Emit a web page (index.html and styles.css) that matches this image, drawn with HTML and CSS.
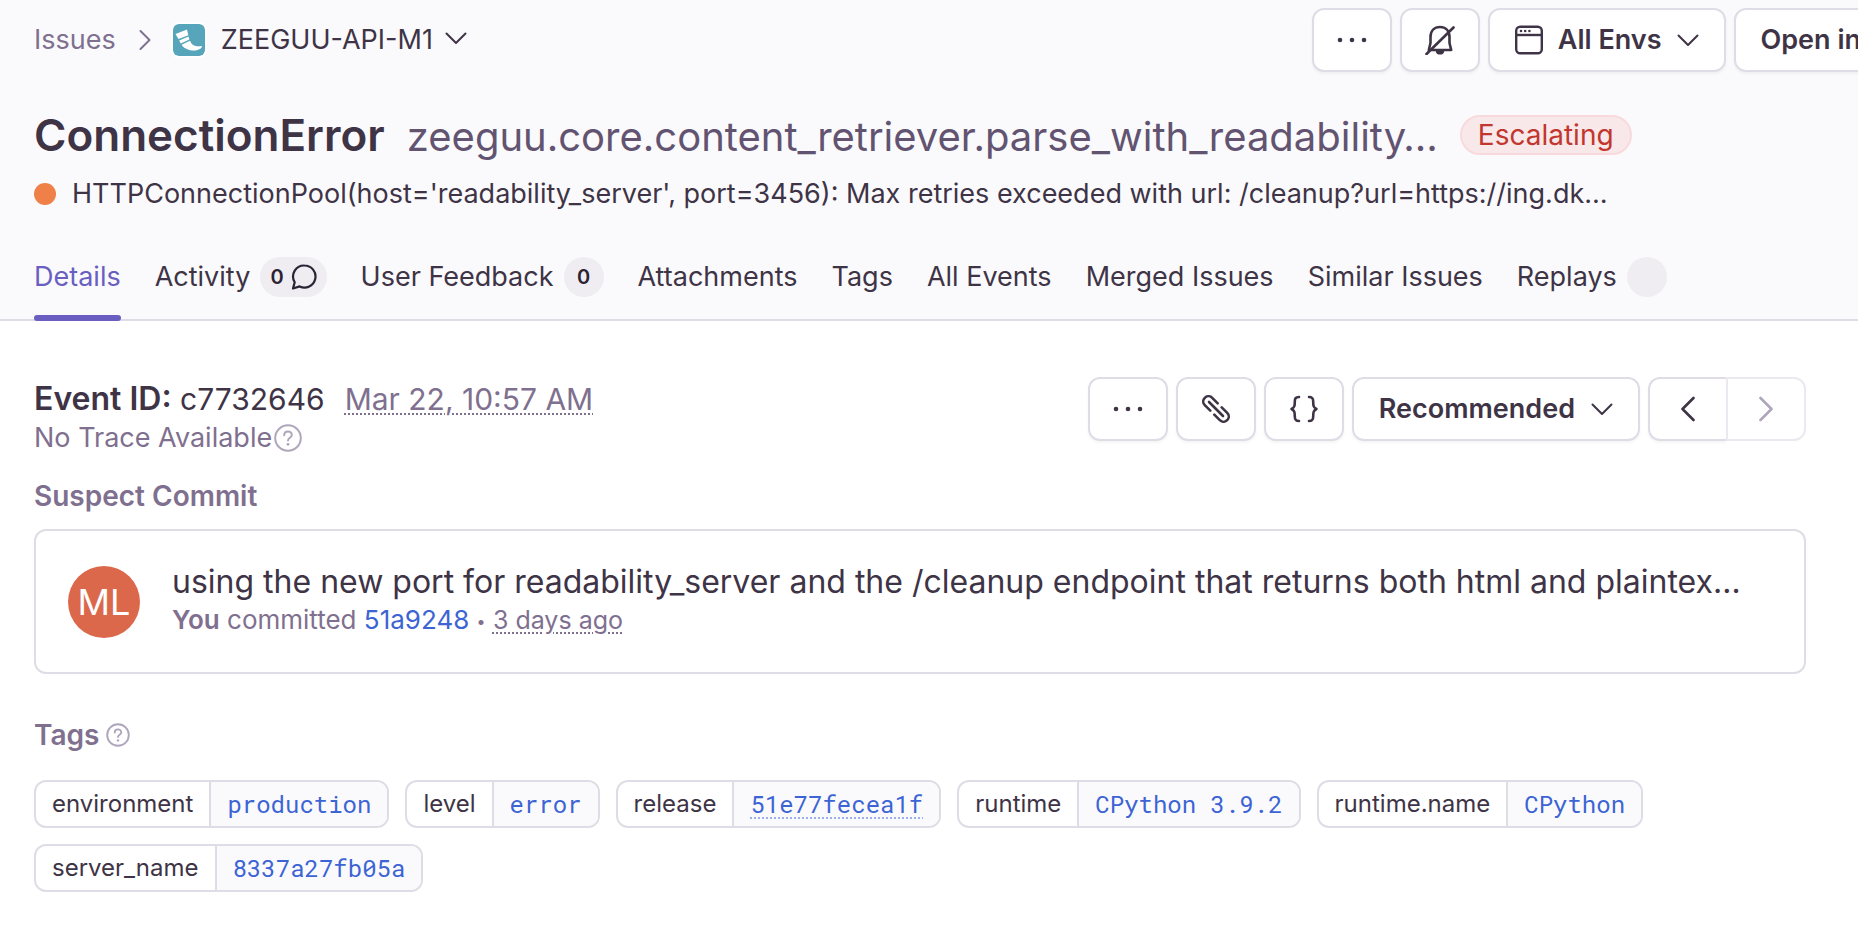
FILE: index.html
```
<!DOCTYPE html>
<html lang="en">
<head>
<meta charset="utf-8">
<meta name="viewport" content="width=device-width, initial-scale=1">
<title>ConnectionError</title>
<link rel="stylesheet" href="styles.css">
</head>
<body>
<header class="header">
  <div class="topbar">
    <nav class="crumbs" aria-label="Breadcrumb">
      <a class="crumb-link" href="#issues">Issues</a>
      <svg class="crumb-sep" width="12" height="22" viewBox="0 0 12 22" fill="none" stroke="currentColor" stroke-width="2" stroke-linecap="round" stroke-linejoin="round"><path d="M1.5 2 10.5 11 1.5 20"/></svg>
      <svg class="project-icon" width="32" height="32" viewBox="0 0 32 32"><rect width="32" height="32" rx="5" fill="#57a5ba"/><g fill="#fff"><path d="M2.500 10 14 5.500 15.300 11.200 5.500 15Z"/><path d="M6.200 16.500 15.600 12.600 16.300 15.400 7.800 19.500Z"/><path d="M8.600 20.800 17 16.800C18.800 21.500 22.500 23 29.200 22 28.500 25.500 23 27.200 17.500 26.200 12.500 25.200 10 23 8.600 20.800Z"/></g></svg>
      <button class="crumb-menu" type="button">ZEEGUU-API-M1
        <svg class="crumb-chevron" width="22" height="13" viewBox="0 0 22 13" fill="none" stroke="currentColor" stroke-width="2" stroke-linecap="round" stroke-linejoin="round"><path d="M1.500 1.500 11 11 20.500 1.500"/></svg>
      </button>
    </nav>
    <div class="actions">
      <button class="btn btn-icon" type="button" aria-label="More actions"><svg width="30" height="30" viewBox="0 0 30 30" fill="currentColor"><circle cx="3" cy="15" r="2.300"/><circle cx="15" cy="15" r="2.300"/><circle cx="27" cy="15" r="2.300"/></svg></button>
      <button class="btn btn-icon" type="button" aria-label="Subscribe"><svg width="30" height="30" viewBox="0 0 30 30" fill="none" stroke="currentColor" stroke-width="2.600" stroke-linecap="round" stroke-linejoin="round"><path d="M3.800 25H26.200L24.500 18V12C24.500 5.500 20.500 2 15 2S5.500 5.500 5.500 12V18Z"/><path d="M11.500 26.500a3.600 3 0 0 0 7 0Z" fill="currentColor" stroke-width="1.500"/><path d="M1.500 29 28.500 2.500"/></svg></button>
      <button class="btn" type="button">
        <svg width="28" height="30" viewBox="0 0 28 30" fill="none" stroke="currentColor" stroke-width="2.400"><rect x="1.200" y="1.700" width="25.600" height="26.600" rx="4"/><path d="M1.200 10H26.800"/><g fill="currentColor" stroke="none"><circle cx="6" cy="6" r="1.300"/><circle cx="10.200" cy="6" r="1.300"/><circle cx="14.400" cy="6" r="1.300"/></g></svg>
        <span class="btn-text">All Envs</span>
        <svg width="22" height="13" viewBox="0 0 22 13" fill="none" stroke="currentColor" stroke-width="2" stroke-linecap="round" stroke-linejoin="round"><path d="M1.500 1.500 11 11 20.500 1.500"/></svg>
      </button>
      <button class="btn" type="button">Open in</button>
    </div>
  </div>
  <div class="title-row">
    <h1 class="title">ConnectionError</h1>
    <span class="culprit">zeeguu.core.content_retriever.parse_with_readability…</span>
    <span class="badge">Escalating</span>
  </div>
  <div class="message"><span class="level-dot"></span><span class="message-text">HTTPConnectionPool(host='readability_server', port=3456): Max retries exceeded with url: /cleanup?url=https://ing.dk…</span></div>
  <nav class="tabs" aria-label="Issue sections">
    <a class="tab tab-active" href="#details">Details</a>
    <a class="tab" href="#activity">Activity
      <span class="count">0
        <svg width="26" height="26" viewBox="0 0 26 26" fill="none" stroke="currentColor" stroke-width="2.200" stroke-linejoin="round"><path d="M13.500 1.500a11 11 0 1 1-4.800 20.900L2 24.500l1.700-6.300A11 11 0 0 1 13.500 1.500Z"/></svg>
      </span>
    </a>
    <a class="tab" href="#feedback">User Feedback <span class="count">0</span></a>
    <a class="tab" href="#attachments">Attachments</a>
    <a class="tab" href="#tags">Tags</a>
    <a class="tab" href="#events">All Events</a>
    <a class="tab" href="#merged">Merged Issues</a>
    <a class="tab" href="#similar">Similar Issues</a>
    <a class="tab" href="#replays">Replays <span class="count"></span></a>
  </nav>
</header>
<main class="main">
  <section class="event">
    <div class="event-info">
      <div class="event-line"><span class="event-id"><strong class="event-label">Event ID:</strong> c7732646</span><time class="dotted">Mar 22, 10:57 AM</time></div>
      <div class="trace">No Trace Available
        <svg width="28" height="28" viewBox="0 0 28 28" fill="none" stroke="currentColor" stroke-width="2"><circle cx="14" cy="14" r="12.800"/><path d="M10.200 11.200c0-5 7.600-5 7.600-.2 0 2.700-3.800 2.800-3.800 5.400" stroke-linecap="round"/><circle cx="14" cy="20.300" r="1.400" fill="currentColor" stroke="none"/></svg>
      </div>
    </div>
    <div class="event-actions">
      <button class="btn btn-icon" type="button" aria-label="More event actions"><svg width="30" height="30" viewBox="0 0 30 30" fill="currentColor"><circle cx="3" cy="15" r="2.300"/><circle cx="15" cy="15" r="2.300"/><circle cx="27" cy="15" r="2.300"/></svg></button>
      <button class="btn btn-icon" type="button" aria-label="Copy event link"><svg width="28" height="28" viewBox="0 0 28 28" fill="none" stroke="currentColor" stroke-width="2.600" stroke-linecap="round"><path d="M8.300 15.700 2.800 10.200A5.200 5.200 0 0 1 10.200 2.800L15.700 8.300"/><path d="M12.300 19.700 17.800 25.200A5.200 5.200 0 0 0 25.200 17.800L19.700 12.300"/><path d="M7 7 21 21"/></svg></button>
      <button class="btn btn-icon" type="button" aria-label="View JSON"><svg width="30" height="30" viewBox="0 0 30 30" fill="none" stroke="currentColor" stroke-width="2.600" stroke-linecap="round" stroke-linejoin="round"><path d="M10 3C6.500 3 5.800 4.500 5.800 7.500 5.800 12 5.500 13.500 2.500 15 5.500 16.500 5.800 18 5.800 22.500 5.800 25.500 6.500 27 10 27"/><path d="M20 3C23.500 3 24.200 4.500 24.200 7.500 24.200 12 24.500 13.500 27.500 15 24.500 16.500 24.200 18 24.200 22.500 24.200 25.500 23.500 27 20 27"/></svg></button>
      <button class="btn" type="button"><span class="btn-text-flush">Recommended</span>
        <svg width="22" height="13" viewBox="0 0 22 13" fill="none" stroke="currentColor" stroke-width="2" stroke-linecap="round" stroke-linejoin="round"><path d="M1.500 1.500 11 11 20.500 1.500"/></svg>
      </button>
      <div class="pager">
        <button class="btn btn-icon pager-prev" type="button" aria-label="Previous event"><svg width="14" height="26" viewBox="0 0 14 26" fill="none" stroke="currentColor" stroke-width="2.600" stroke-linecap="round" stroke-linejoin="round"><path d="M12.500 2 1.500 13 12.500 24"/></svg></button>
        <button class="btn btn-icon pager-next" type="button" aria-label="Next event" disabled><svg width="14" height="26" viewBox="0 0 14 26" fill="none" stroke="currentColor" stroke-width="2.600" stroke-linecap="round" stroke-linejoin="round"><path d="M1.500 2 12.500 13 1.500 24"/></svg></button>
      </div>
    </div>
  </section>
  <section>
    <h2 class="section-title">Suspect Commit</h2>
    <div class="card">
      <span class="avatar">ML</span>
      <div class="commit">
        <div class="commit-title">using the new port for readability_server and the /cleanup endpoint that returns both html and plaintex…</div>
        <div class="commit-meta"><strong class="commit-author">You</strong> committed <a class="link" href="#commit">51a9248</a> <span class="bullet">•</span> <time class="dotted commit-time">3 days ago</time></div>
      </div>
    </div>
  </section>
  <section class="tags-section">
    <h2 class="section-title tags-title">Tags
      <svg class="help" width="24" height="24" viewBox="0 0 28 28" fill="none" stroke="currentColor" stroke-width="2.200"><circle cx="14" cy="14" r="12.600"/><path d="M10.200 11.200c0-5 7.600-5 7.600-.2 0 2.700-3.800 2.800-3.800 5.400" stroke-linecap="round"/><circle cx="14" cy="20.300" r="1.400" fill="currentColor" stroke="none"/></svg>
    </h2>
    <ul class="tags">
      <li class="tag"><span class="tag-key">environment</span><a class="tag-value" href="#environment">production</a></li>
      <li class="tag"><span class="tag-key">level</span><a class="tag-value" href="#level">error</a></li>
      <li class="tag"><span class="tag-key">release</span><a class="tag-value" href="#release"><span class="release">51e77fecea1f</span></a></li>
      <li class="tag"><span class="tag-key">runtime</span><a class="tag-value" href="#runtime">CPython 3.9.2</a></li>
      <li class="tag"><span class="tag-key">runtime.name</span><a class="tag-value" href="#runtime-name">CPython</a></li>
      <li class="tag"><span class="tag-key">server_name</span><a class="tag-value" href="#server">8337a27fb05a</a></li>
    </ul>
  </section>
</main>
</body>
</html>
```
FILE: styles.css
```
:root {
  --text: #3e3446;
  --muted: #80708f;
  --border: #e0dce5;
  --surface: #fafafd;
  --link: #3c64d4;
  --accent: #6a5fc1;
}
* { box-sizing: border-box; }
body {
  margin: 0;
  overflow-x: hidden;
  background: #fff;
  color: var(--text);
  font: 400 27px/34px Inter, "Open Sans", sans-serif;
}
h1, h2, ul { margin: 0; padding: 0; }
a { color: inherit; text-decoration: none; }
button { font: inherit; color: inherit; cursor: pointer; }
svg { display: block; flex: none; }

.header {
  padding: 8px 0 0 34px;
  background: var(--surface);
  border-bottom: 2px solid var(--border);
}
.topbar {
  display: flex;
  align-items: center;
  justify-content: space-between;
  margin-right: -30px;
}
.crumbs { display: flex; align-items: center; }
.crumb-link { color: var(--muted); }
.crumb-sep { margin: 0 22px 0 23px; color: var(--muted); }
.project-icon { border-radius: 6px; box-shadow: 0 0 0 2px #fff; }
.crumb-menu {
  display: flex;
  align-items: center;
  gap: 12px;
  padding: 0;
  margin-left: 16px;
  border: 0;
  background: none;
}
.crumb-chevron { margin-bottom: 4px; }
.actions, .event-actions { display: flex; flex: none; gap: 8px; }
.btn {
  display: flex;
  align-items: center;
  justify-content: center;
  height: 64px;
  padding: 0 25px;
  border: 2px solid var(--border);
  border-radius: 12px;
  background: #fff;
  box-shadow: 0 2px 3px rgba(62, 52, 70, 0.05);
  font-weight: 600;
  white-space: nowrap;
}
.btn-icon { width: 80px; padding: 0; }
.btn-text { margin: 0 15px; }
.btn-text-flush { margin-right: 16px; }

.title-row {
  display: flex;
  align-items: baseline;
  gap: 22px;
  height: 48px;
  margin-top: 39px;
  white-space: nowrap;
}
.title { font-size: 44px; line-height: 48px; font-weight: 600; }
.culprit { color: #625471; font-size: 40px; line-height: 48px; }
.badge {
  align-self: center;
  height: 40px;
  padding: 0 16px;
  border: 2px solid #f8dadd;
  border-radius: 20px;
  background: #f9e8ea;
  color: #c1372f;
  font-size: 28px;
  line-height: 36px;
}
.message {
  display: flex;
  align-items: center;
  gap: 16px;
  margin-top: 18px;
  white-space: nowrap;
}
.level-dot { width: 22px; height: 22px; border-radius: 50%; background: #ee8048; }
.tabs { display: flex; gap: 34px; margin-top: 46px; white-space: nowrap; }
.tab {
  display: flex;
  align-items: center;
  gap: 10px;
  height: 40px;
  margin-bottom: 22px;
}
.tab-active {
  position: relative;
  color: var(--accent);
}
.tab-active::after {
  content: "";
  position: absolute;
  right: 0;
  bottom: -24px;
  left: 0;
  height: 6px;
  border-radius: 3px;
  background: var(--accent);
}
.count {
  display: flex;
  align-items: center;
  justify-content: center;
  gap: 7px;
  min-width: 40px;
  height: 40px;
  padding: 0 10px;
  border-radius: 20px;
  background: #efedf2;
  color: #2b2233;
  font-size: 20px;
  font-weight: 600;
}

.main { padding: 56px 52px 36px 34px; }
.event { display: flex; justify-content: space-between; }
.event-line {
  display: flex;
  gap: 20px;
  font-size: 30px;
  line-height: 44px;
}
.event-label { font-size: 32px; font-weight: 600; }
.dotted {
  color: var(--muted);
  text-decoration: underline dotted 2px;
  text-underline-offset: 3px;
}
.trace { display: flex; align-items: center; gap: 2px; color: var(--muted); }
.trace svg, .help { color: #afa6bb; }
.pager { display: flex; }
.pager-prev { width: 78px; border-right: 0; border-radius: 12px 0 0 12px; }
.pager-next {
  border-color: #ebe8ef;
  border-radius: 0 12px 12px 0;
  box-shadow: none;
  color: #afa6bb;
  cursor: default;
}
.section-title {
  margin-top: 24px;
  color: var(--muted);
  font-size: 28px;
  line-height: 34px;
  font-weight: 600;
}
.card {
  display: flex;
  align-items: center;
  gap: 32px;
  margin-top: 16px;
  padding: 30px 32px;
  border: 2px solid var(--border);
  border-radius: 12px;
}
.avatar {
  flex: none;
  width: 72px;
  height: 72px;
  border-radius: 50%;
  background: #db684b;
  color: #fff;
  font-size: 36px;
  line-height: 72px;
  text-align: center;
}
.commit { min-width: 0; padding-bottom: 4px; }
.commit-title {
  overflow: hidden;
  font-size: 32px;
  line-height: 42px;
  text-overflow: ellipsis;
  white-space: nowrap;
}
.commit-meta { color: var(--muted); font-size: 26px; line-height: 34px; }
.commit-author { font-weight: 600; }
.commit-time { font-size: 25px; }
.bullet { font-size: 16px; vertical-align: 2px; }
.link { color: var(--link); }
.tags-section { padding-top: 20px; }
.tags-title { display: flex; align-items: center; gap: 7px; }
.tags { display: flex; flex-wrap: wrap; gap: 16px; margin-top: 28px; list-style: none; }
.tag {
  display: flex;
  overflow: hidden;
  height: 48px;
  border: 2px solid var(--border);
  border-radius: 12px;
  font-size: 24px;
  line-height: 44px;
}
.tag-key { padding: 0 16px; }
.tag-value {
  padding: 0 16px;
  border-left: 2px solid var(--border);
  background: var(--surface);
  color: var(--link);
  font-family: "Roboto Mono", "Liberation Mono", monospace;
}
.release { text-decoration: underline dotted 2px #9bb0ea; text-underline-offset: 4px; }
```
